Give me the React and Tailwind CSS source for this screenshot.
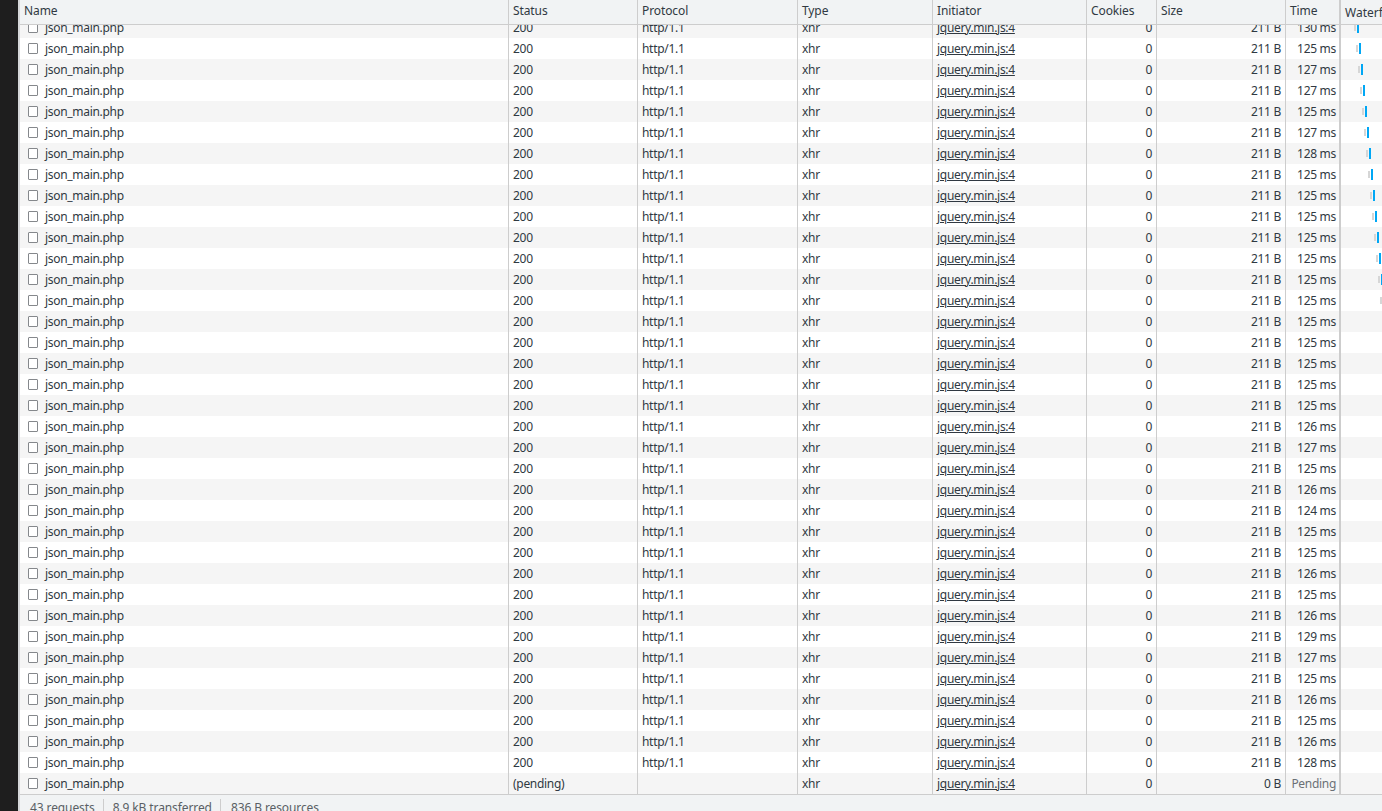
const times = [130, 125, 127, 127, 125, 127, 128, 125, 125, 125, 125, 125, 125, 125, 125, 125, 125, 125, 125, 126, 127, 125, 126, 124, 125, 125, 126, 125, 126, 129, 127, 125, 126, 125, 126, 128];

const cell = 'shrink-0 overflow-hidden whitespace-nowrap border-r border-[#cdcdcd] px-1';

const Row = ({ index, time }) => {
  const pending = time === undefined;
  const barLeft = 1357 + index * 2 - 1341;

  return (
    <div className={`flex h-[21px] shrink-0 items-center leading-[21px] ${index % 2 === 0 ? 'bg-[#f5f5f5]' : 'bg-white'}`}>
      <div className={`${cell} flex h-full w-[489px] items-center pl-[8px]`}>
        <span className="h-[11px] w-[10px] shrink-0 rounded-[1px] border border-[#85888c] bg-white" />
        <span className="ml-[7px]">json_main.php</span>
      </div>
      <div className={`${cell} h-full w-[129px]`}>{pending ? '(pending)' : 200}</div>
      <div className={`${cell} h-full w-[160px]`}>{pending ? '' : 'http/1.1'}</div>
      <div className={`${cell} h-full w-[135px]`}>xhr</div>
      <div className={`${cell} h-full w-[154px] underline`}>jquery.min.js:4</div>
      <div className={`${cell} h-full w-[70px] text-right`}>0</div>
      <div className={`${cell} h-full w-[129px] text-right`}>{pending ? '0 B' : '211 B'}</div>
      <div className={`${cell} h-full w-[55px] border-r-2 pl-0 pr-[3px] text-right ${pending ? 'text-[#6b7075]' : ''}`}>
        {pending ? 'Pending' : `${time} ms`}
      </div>
      <div className="relative h-full flex-1 overflow-hidden">
        {!pending && index < 14 && (
          <>
            <span className="absolute top-[7px] h-[7px] w-[2px] bg-[#d6d6d6]" style={{ left: barLeft - 3 }} />
            <span className="absolute top-[5px] h-[11px] w-[2px] bg-[#00a7f5]" style={{ left: barLeft }} />
          </>
        )}
      </div>
    </div>
  );
};

const App = () => {
  const headers = [
    ['Name', 'w-[489px]'],
    ['Status', 'w-[129px]'],
    ['Protocol', 'w-[160px]'],
    ['Type', 'w-[135px]'],
    ['Initiator', 'w-[154px]'],
    ['Cookies', 'w-[70px]'],
    ['Size', 'w-[129px]'],
    ['Time', 'w-[55px] border-r-2'],
  ];

  return (
    <div className="flex h-[811px] w-[1382px] overflow-hidden bg-[#f1f3f4] font-['Noto_Sans',sans-serif] text-xs tracking-[-0.3px] text-[#303942]">
      <div className="w-[20px] shrink-0 border-r-2 border-[#d5d7d9] bg-[#1e1e1e]" />

      <div className="flex min-w-0 flex-1 flex-col">
        {/* Header */}
        <div className="z-10 flex h-[25px] shrink-0 items-center border-b border-[#cdcdcd] bg-[#f1f3f4] leading-[20px] tracking-[-0.1px]">
          {headers.map(([label, width]) => (
            <div key={label} className={`${cell} h-full pt-px ${width}`}>{label}</div>
          ))}
          <div className="overflow-hidden whitespace-nowrap px-1 pt-px tracking-normal">Waterfall</div>
        </div>

        {/* Rows */}
        <div className="flex h-[769px] shrink-0 flex-col overflow-hidden">
          <div className="-mt-[8px] flex flex-col">
            {times.map((time, i) => <Row key={i} index={i} time={time} />)}
            <Row index={36} />
          </div>
        </div>

        {/* Status bar */}
        <div className="flex h-[17px] shrink-0 items-start overflow-hidden border-t border-[#cdcdcd] pl-[10px] pt-[4px] leading-[18px] tracking-[-0.1px] text-[#5a5f64]">
          <span className="pr-[8px]">43 requests</span>
          <span className="border-l border-[#cdcdcd] pl-[9px] pr-[8px]">8.9 kB transferred</span>
          <span className="border-l border-[#cdcdcd] pl-[10px]">836 B resources</span>
        </div>
      </div>
    </div>
  );
};

export default App;
